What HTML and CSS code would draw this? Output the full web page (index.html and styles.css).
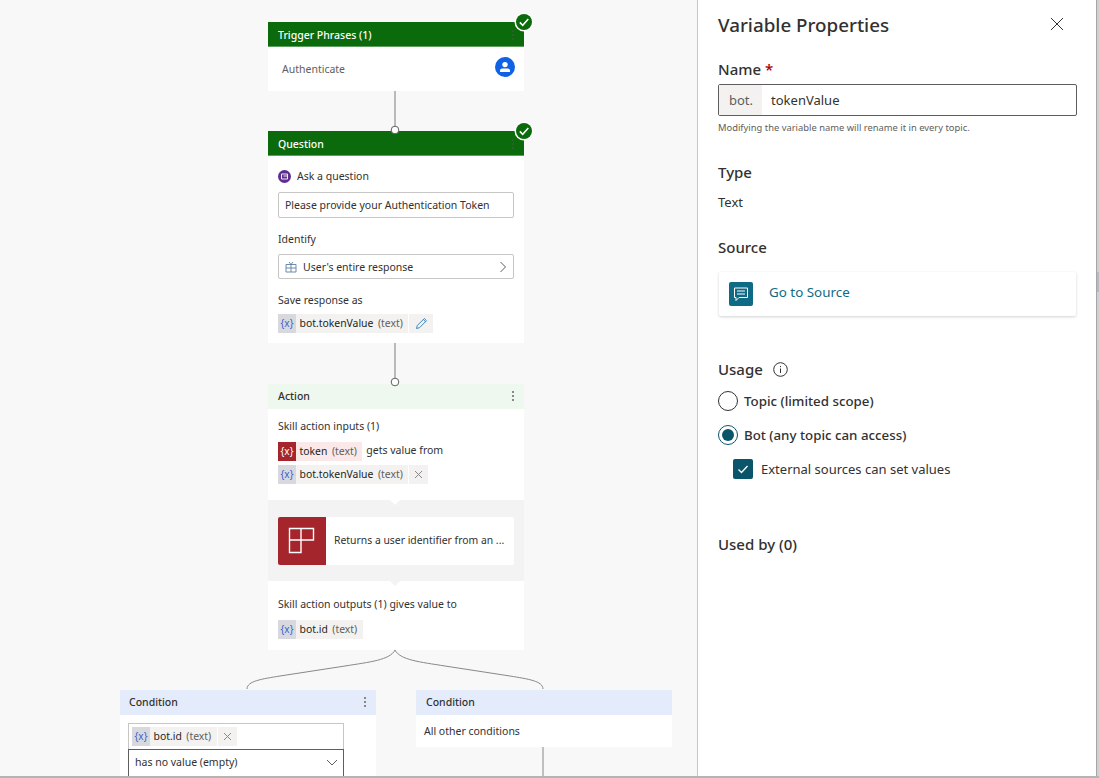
FILE: index.html
```html
<!DOCTYPE html>
<html lang="en">
<head>
    <meta charset="UTF-8">
    <meta name="viewport" content="width=device-width, initial-scale=1.0">
    <title>Variable Properties</title>
    <link rel="stylesheet" href="styles.css">
</head>
<body>

<div class="page">
    <div class="canvas">
        <!-- connectors -->
        <svg class="wires" width="697" height="776" viewBox="0 0 697 776">
            <path d="M395 91V126" class="wire-dot"/>
            <path d="M395 343V378" class="wire-dot"/>
            <path d="M395 650C390 660 370 662 345 666L280 676C262 679 247 681 247 689" class="wire"/>
            <path d="M395 650C400 660 420 662 445 666L510 676C528 679 543 681 543 689" class="wire"/>
            <path d="M543 747V776" class="wire"/>
        </svg>

        <div class="node node-trigger">
            <div class="node-head head-green">
                <span>Trigger Phrases (1)</span>
                <span class="dots dots-faint"><i></i><i></i><i></i></span>
            </div>
            <div class="trigger-body">
                <span class="trigger-text">Authenticate</span>
                <svg class="person" width="20" height="20" viewBox="0 0 20 20">
                    <circle cx="10" cy="10" r="10" fill="#0f62e6"/>
                    <circle cx="10" cy="7.6" r="2.7" fill="#fff"/>
                    <path d="M5 15v-1.2c0-1.3 1-2.2 2.2-2.2h5.6c1.2 0 2.2.9 2.2 2.2V15z" fill="#fff"/>
                </svg>
            </div>
            <svg class="ok-badge" width="20" height="20" viewBox="0 0 20 20">
                <circle cx="10" cy="10" r="9.5" fill="#fff"/>
                <circle cx="10" cy="10" r="8" fill="#0b6a0b"/>
                <path d="M5.8 10.4l2.900 2.900 5.600-6.400" fill="none" stroke="#fff" stroke-width="1.5"/>
            </svg>
        </div>

        <div class="node node-question">
            <div class="node-head head-green">
                <span>Question</span>
                <span class="dots dots-faint"><i></i><i></i><i></i></span>
            </div>
            <div class="node-body">
                <div class="ask-row">
                    <svg width="13" height="13" viewBox="0 0 13 13">
                        <circle cx="6.5" cy="6.5" r="6.5" fill="#5c2e91"/>
                        <path d="M3.500 4h6v5h-6zM5.500 6h4" fill="none" stroke="#fff" stroke-width=".9"/>
                    </svg>
                    <span>Ask a question</span>
                </div>
                <div class="field">Please provide your Authentication Token</div>
                <div class="small-label">Identify</div>
                <div class="field field-pick">
                    <svg width="12" height="12" viewBox="0 0 12 12" fill="none" stroke="#5b7fa6" stroke-width=".9">
                        <path d="M1 3.500h10v7.500h-10zM1 7h10M6 3.500v7.500M6 3.500L4 1M6 3.500l2-2.500"/>
                    </svg>
                    <span class="pick-text">User's entire response</span>
                    <svg width="8" height="12" viewBox="0 0 8 12" fill="none" stroke="#605e5c" stroke-width="1">
                        <path d="M1.500 1l5 5-5 5"/>
                    </svg>
                </div>
                <div class="small-label">Save response as</div>
                <div class="chip">
                    <span class="chip-x">{x}</span>
                    <span class="chip-name">bot.tokenValue</span>
                    <span class="chip-type">(text)</span>
                    <span class="chip-btn">
                        <svg width="13" height="13" viewBox="0 0 13 13" fill="none" stroke="#3d87b8" stroke-width="1">
                            <path d="M1.500 11.500l.8-3L9.300 1.500l2.200 2.200-7 7zM8.300 2.500l2.200 2.200"/>
                        </svg>
                    </span>
                </div>
            </div>
            <svg class="ok-badge" width="20" height="20" viewBox="0 0 20 20">
                <circle cx="10" cy="10" r="9.5" fill="#fff"/>
                <circle cx="10" cy="10" r="8" fill="#0b6a0b"/>
                <path d="M5.800 10.400l2.900 2.900 5.600-6.400" fill="none" stroke="#fff" stroke-width="1.5"/>
            </svg>
        </div>

        <div class="node node-action">
            <div class="node-head head-action">
                <span>Action</span>
                <span class="dots"><i></i><i></i><i></i></span>
            </div>
            <div class="action-top">
                <div class="small-label">Skill action inputs (1)</div>
                <div class="chip-row">
                    <div class="chip chip-red">
                        <span class="chip-x">{x}</span>
                        <span class="chip-name">token</span>
                        <span class="chip-type">(text)</span>
                    </div>
                    <span class="gets">gets value from</span>
                </div>
                <div class="chip">
                    <span class="chip-x">{x}</span>
                    <span class="chip-name">bot.tokenValue</span>
                    <span class="chip-type">(text)</span>
                    <span class="chip-btn chip-close">
                        <svg width="9" height="9" viewBox="0 0 9 9" stroke="#8a8886" stroke-width="1"><path d="M1 1l7 7M8 1L1 8"/></svg>
                    </span>
                </div>
            </div>
            <div class="skill-band">
                <div class="skill-card">
                    <span class="skill-icon">
                        <svg width="28" height="28" viewBox="0 0 28 28" fill="none" stroke="#fff" stroke-width="1.4">
                            <path d="M1.500 1.500h11.500v11.500h-11.500zM13 1.500h12.500v11.500h-12.500zM1.500 13h11.500v12.500h-11.500z"/>
                        </svg>
                    </span>
                    <span class="skill-text">Returns a user identifier from an ...</span>
                </div>
            </div>
            <div class="action-bottom">
                <div class="small-label">Skill action outputs (1) gives value to</div>
                <div class="chip">
                    <span class="chip-x">{x}</span>
                    <span class="chip-name">bot.id</span>
                    <span class="chip-type">(text)</span>
                </div>
            </div>
        </div>

        <div class="node node-cond-a">
            <div class="node-head head-cond">
                <span>Condition</span>
                <span class="dots"><i></i><i></i><i></i></span>
            </div>
            <div class="cond-body">
                <div class="cond-box">
                    <div class="chip">
                        <span class="chip-x">{x}</span>
                        <span class="chip-name">bot.id</span>
                        <span class="chip-type">(text)</span>
                        <span class="chip-btn chip-close">
                            <svg width="9" height="9" viewBox="0 0 9 9" stroke="#8a8886" stroke-width="1"><path d="M1 1l7 7M8 1L1 8"/></svg>
                        </span>
                    </div>
                </div>
                <div class="cond-select">
                    <span>has no value (empty)</span>
                    <svg width="12" height="7" viewBox="0 0 12 7" fill="none" stroke="#605e5c" stroke-width="1"><path d="M1 1l5 5 5-5"/></svg>
                </div>
            </div>
        </div>

        <div class="node node-cond-b">
            <div class="node-head head-cond">Condition</div>
            <div class="cond-other">All other conditions</div>
        </div>

        <!-- these sit over the card edges -->
        <svg class="port port-q" width="10" height="10" viewBox="0 0 10 10"><circle cx="5" cy="5" r="3.8" fill="#fff" stroke="#605e5c"/></svg>
        <svg class="port port-a" width="10" height="10" viewBox="0 0 10 10"><circle cx="5" cy="5" r="3.8" fill="#fff" stroke="#605e5c"/></svg>
    </div>

    <div class="panel">
        <div class="panel-top">
            <h1>Variable Properties</h1>
            <svg class="close" width="14" height="14" viewBox="0 0 14 14" stroke="#323130" stroke-width="1"><path d="M1 1l12 12M13 1L1 13"/></svg>
        </div>

        <div class="sec-title sec-name">Name <span class="req">*</span></div>
        <div class="name-input">
            <span class="prefix">bot.</span>
            <span class="name-value">tokenValue</span>
        </div>
        <div class="help">Modifying the variable name will rename it in every topic.</div>

        <div class="sec-title sec-type">Type</div>
        <div class="plain">Text</div>

        <div class="sec-title sec-source">Source</div>
        <div class="source-card">
            <span class="source-icon">
                <svg width="16" height="16" viewBox="0 0 16 16" fill="none" stroke="#fff" stroke-width="1">
                    <path d="M1.500 2h13v9.500h-8.500l-3 3v-3h-1.500zM4 5h8M4 8h8"/>
                </svg>
            </span>
            <span class="source-link">Go to Source</span>
        </div>

        <div class="sec-title sec-usage">
            <span>Usage</span>
            <svg width="15" height="15" viewBox="0 0 15 15" fill="none" stroke="#323130" stroke-width="1">
                <circle cx="7.500" cy="7.500" r="6.800"/>
                <path d="M7.500 6.500v4.500M7.500 4v1.200"/>
            </svg>
        </div>
        <div class="radio-row">
            <span class="radio"></span>
            <span>Topic (limited scope)</span>
        </div>
        <div class="radio-row">
            <span class="radio radio-on"><i></i></span>
            <span>Bot (any topic can access)</span>
        </div>
        <div class="check-row">
            <span class="check">
                <svg width="14" height="14" viewBox="0 0 14 14" fill="none" stroke="#fff" stroke-width="1.300"><path d="M2.500 7.500l3 3 6-6.500"/></svg>
            </span>
            <span>External sources can set values</span>
        </div>

        <div class="sec-title sec-used">Used by (0)</div>
    </div>

    <div class="edge"></div>
</div>

</body>
</html>
```

FILE: styles.css
```css
html, body {
    margin: 0;
    padding: 0;
    height: 100%;
    overflow: hidden;
    background: #fff;
}
body {
    font-family: "Noto Sans", "Open Sans", Arial, sans-serif;
    color: #323130;
}
.page {
    display: flex;
    height: 778px;
    width: 1099px;
    box-sizing: border-box;
    border-bottom: 2px solid #b4b4b4;
}

/* canvas side */
.canvas {
    position: relative;
    width: 697px;
    flex: none;
    background: #f8f8f8;
    overflow: hidden;
}
.wires {
    position: absolute;
    left: 0;
    top: 0;
}
.wire {
    fill: none;
    stroke: #8a8886;
    stroke-width: 1;
}
.wire-dot {
    fill: none;
    stroke: #a6a6a6;
    stroke-width: 1.500;
}
.node {
    position: absolute;
    width: 256px;
    background: #fff;
    font-size: 10.500px;
}
.node-trigger { left: 268px; top: 22px; }
.node-question { left: 268px; top: 131px; }
.node-action { left: 268px; top: 384px; }
.node-cond-a { left: 120px; top: 690px; }
.node-cond-b { left: 416px; top: 690px; }
.port {
    position: absolute;
    left: 390px;
}
.port-q { top: 125px; }
.port-a { top: 377px; }
.node-head {
    display: flex;
    align-items: center;
    justify-content: space-between;
    box-sizing: border-box;
    height: 25px;
    padding: 0 8px 0 10px;
    font-size: 10.500px;
    font-weight: 500;
}
.head-green {
    padding-top: 2px;
    background: #0b6a0b;
    color: #fff;
    border-bottom: 1px solid #5c9c5c;
}
.head-action {
    padding-bottom: 2px;
    background: #eef8ee;
}
.head-cond {
    padding-bottom: 2px;
    background: #e4ecfb;
}
.node-cond-a .head-cond { padding-left: 9px; }
.dots {
    display: flex;
    flex-direction: column;
    gap: 2px;
    padding: 0 2px;
}
.dots i {
    display: block;
    width: 2px;
    height: 2px;
    background: #8a8886;
}
.dots-faint i { background: #2f5f2f; }
.ok-badge {
    position: absolute;
    right: -10px;
    top: -10px;
}
.trigger-body {
    display: flex;
    align-items: center;
    justify-content: space-between;
    height: 44px;
    padding: 0 9px 0 14px;
    box-sizing: border-box;
}
.person { margin-top: -4px; }
.trigger-text { color: #605e5c; }
.node-body {
    height: 187px;
    box-sizing: border-box;
    padding: 13px 10px 0;
}
.ask-row {
    display: flex;
    align-items: center;
    gap: 6px;
    height: 14px;
}
.field {
    display: flex;
    align-items: center;
    box-sizing: border-box;
    height: 26px;
    margin-top: 9px;
    padding: 0 6px;
    background: #fff;
    border: 1px solid #c8c6c4;
    border-radius: 2px;
}
.small-label {
    line-height: 14px;
}
.node-body .small-label {
    margin-top: 14px;
}
.field-pick {
    height: 25px;
    margin-top: 8px;
    gap: 6px;
}
.pick-text { flex: 1; }
.chip {
    display: flex;
    align-items: center;
    width: fit-content;
    height: 19px;
    background: #f3f2f1;
    white-space: nowrap;
}
.node-body .chip { margin-top: 7px; }
.chip-x {
    display: flex;
    align-items: center;
    justify-content: center;
    box-sizing: border-box;
    width: 18px;
    height: 100%;
    padding-bottom: 1px;
    background: #d8d9de;
    color: #3b5fd0;
    font-size: 10px;
}
.chip-name {
    margin-left: 3.500px;
    padding-bottom: 2px;
    font-size: 10.400px;
    color: #201f1e;
}
.chip-type {
    margin-left: 4.500px;
    padding: 0 5.500px 2px 0;
    font-size: 10.400px;
    color: #605e5c;
}
.chip-btn {
    display: flex;
    align-items: center;
    justify-content: center;
    width: 24px;
    height: 100%;
    border-left: 1px solid #fff;
}
.chip-close { width: 19px; }
.chip-red { background: #fbe9e9; }
.chip-red .chip-x { background: #a4262c; color: #fff; }
.action-top {
    height: 91px;
    box-sizing: border-box;
    padding: 10px 10px 0;
}
.chip-row {
    display: flex;
    align-items: center;
    gap: 4px;
    margin-top: 9px;
    margin-bottom: 4px;
}
.gets { padding-bottom: 4px; }
.skill-band {
    position: relative;
    z-index: 1;
    height: 81px;
    box-sizing: border-box;
    padding: 17px 10px 0;
    background: #f3f3f3;
}
.skill-band::before,
.skill-band::after {
    content: "";
    position: absolute;
    left: 122px;
    width: 10px;
    height: 10px;
    background: #fff;
    transform: rotate(45deg);
}
.skill-band::before { top: -7px; }
.skill-band::after { bottom: -3px; background: #f3f3f3; }
.skill-card {
    display: flex;
    align-items: center;
    height: 48px;
    background: #fff;
    border-radius: 2px;
    overflow: hidden;
}
.skill-icon {
    display: flex;
    align-items: center;
    justify-content: center;
    width: 48px;
    height: 48px;
    background: #a4262c;
}
.skill-text {
    margin-left: 8px;
    padding-bottom: 2px;
    font-size: 10.400px;
    white-space: nowrap;
}
.action-bottom {
    height: 69px;
    box-sizing: border-box;
    padding: 16px 10px 0;
}
.action-bottom .chip { margin-top: 9px; }
.cond-body {
    height: 61px;
    box-sizing: border-box;
    padding: 8px 32px 0 8px;
}
.cond-box {
    height: 26px;
    box-sizing: border-box;
    padding: 3px 3px 0;
    border: 1px solid #c8c6c4;
    border-bottom: 0;
}
.cond-select {
    display: flex;
    align-items: center;
    justify-content: space-between;
    box-sizing: border-box;
    height: 28px;
    padding: 0 5px 2px 6px;
    border: 1px solid #605e5c;
}
.cond-other {
    height: 32px;
    box-sizing: border-box;
    padding: 9px 8px 0;
}

/* right side panel */
.panel {
    width: 399px;
    flex: none;
    box-sizing: border-box;
    border-left: 1px solid #c8c6c4;
    padding: 0 19px 0 20px;
    background: #fff;
}
.panel-top {
    display: flex;
    align-items: center;
    justify-content: space-between;
    height: 50px;
    padding-right: 13px;
}
.panel-top h1 {
    margin: 0;
    font-size: 18.800px;
    font-weight: 500;
}
.close { flex: none; margin-top: -2px; }
.sec-title {
    padding-bottom: 2px;
    font-size: 15px;
    font-weight: 500;
    line-height: 18px;
}
.sec-name { margin-top: 10px; }
.req { color: #a80000; }
.name-input {
    display: flex;
    align-items: center;
    box-sizing: border-box;
    height: 32px;
    margin-top: 4px;
    border: 1px solid #605e5c;
    border-radius: 2px;
    font-size: 13px;
}
.prefix {
    display: flex;
    align-items: center;
    height: 100%;
    padding: 0 9px 0 10px;
    background: #f3f2f1;
    color: #605e5c;
}
.name-value { margin-left: 9px; }
.help {
    margin-top: 5px;
    font-size: 9.400px;
    line-height: 13px;
    color: #605e5c;
}
.sec-type { margin-top: 29px; }
.plain { margin-top: 10px; font-size: 13px; line-height: 18px; }
.sec-source { margin-top: 27px; }
.source-card {
    display: flex;
    align-items: center;
    box-sizing: border-box;
    height: 44px;
    margin-top: 14px;
    width: 357px;
    margin-left: 1px;
    padding-left: 10px;
    background: #fff;
    border-radius: 2px;
    box-shadow: 0 1px 3px rgba(0, 0, 0, .18);
}
.source-icon {
    display: flex;
    align-items: center;
    justify-content: center;
    width: 24px;
    height: 24px;
    background: #0f6b85;
    border-radius: 2px;
}
.source-link {
    margin-left: 16px;
    padding-bottom: 4px;
    font-size: 13.400px;
    color: #0f6b85;
}
.sec-usage {
    display: flex;
    align-items: center;
    gap: 10px;
    margin-top: 44px;
}
.radio-row {
    display: flex;
    align-items: center;
    gap: 6px;
    height: 20px;
    margin-top: 14px;
    font-size: 13.300px;
    font-weight: 500;
}
.sec-usage + .radio-row { margin-top: 11px; }
.radio {
    display: flex;
    align-items: center;
    justify-content: center;
    box-sizing: border-box;
    width: 20px;
    height: 20px;
    border: 1px solid #323130;
    border-radius: 50%;
}
.radio-on { border-color: #0b556a; }
.radio-on i {
    display: block;
    width: 12px;
    height: 12px;
    border-radius: 50%;
    background: #0b556a;
}
.check-row {
    display: flex;
    align-items: center;
    gap: 8px;
    height: 20px;
    margin-top: 14px;
    margin-left: 15px;
    font-size: 13px;
}
.check {
    display: flex;
    align-items: center;
    justify-content: center;
    width: 20px;
    height: 20px;
    background: #0b556a;
    border-radius: 2px;
}
.sec-used { margin-top: 56px; }

/* sliver of the page behind the panel */
.edge {
    width: 3px;
    flex: none;
    border-left: 1px solid #a6a6a6;
    background: linear-gradient(#d0d0d0 0 272px, #b9b9c4 272px 292px, #d0d0d0 292px 400px, #bdbdbd 400px 480px, #d0d0d0 480px);
}
```
